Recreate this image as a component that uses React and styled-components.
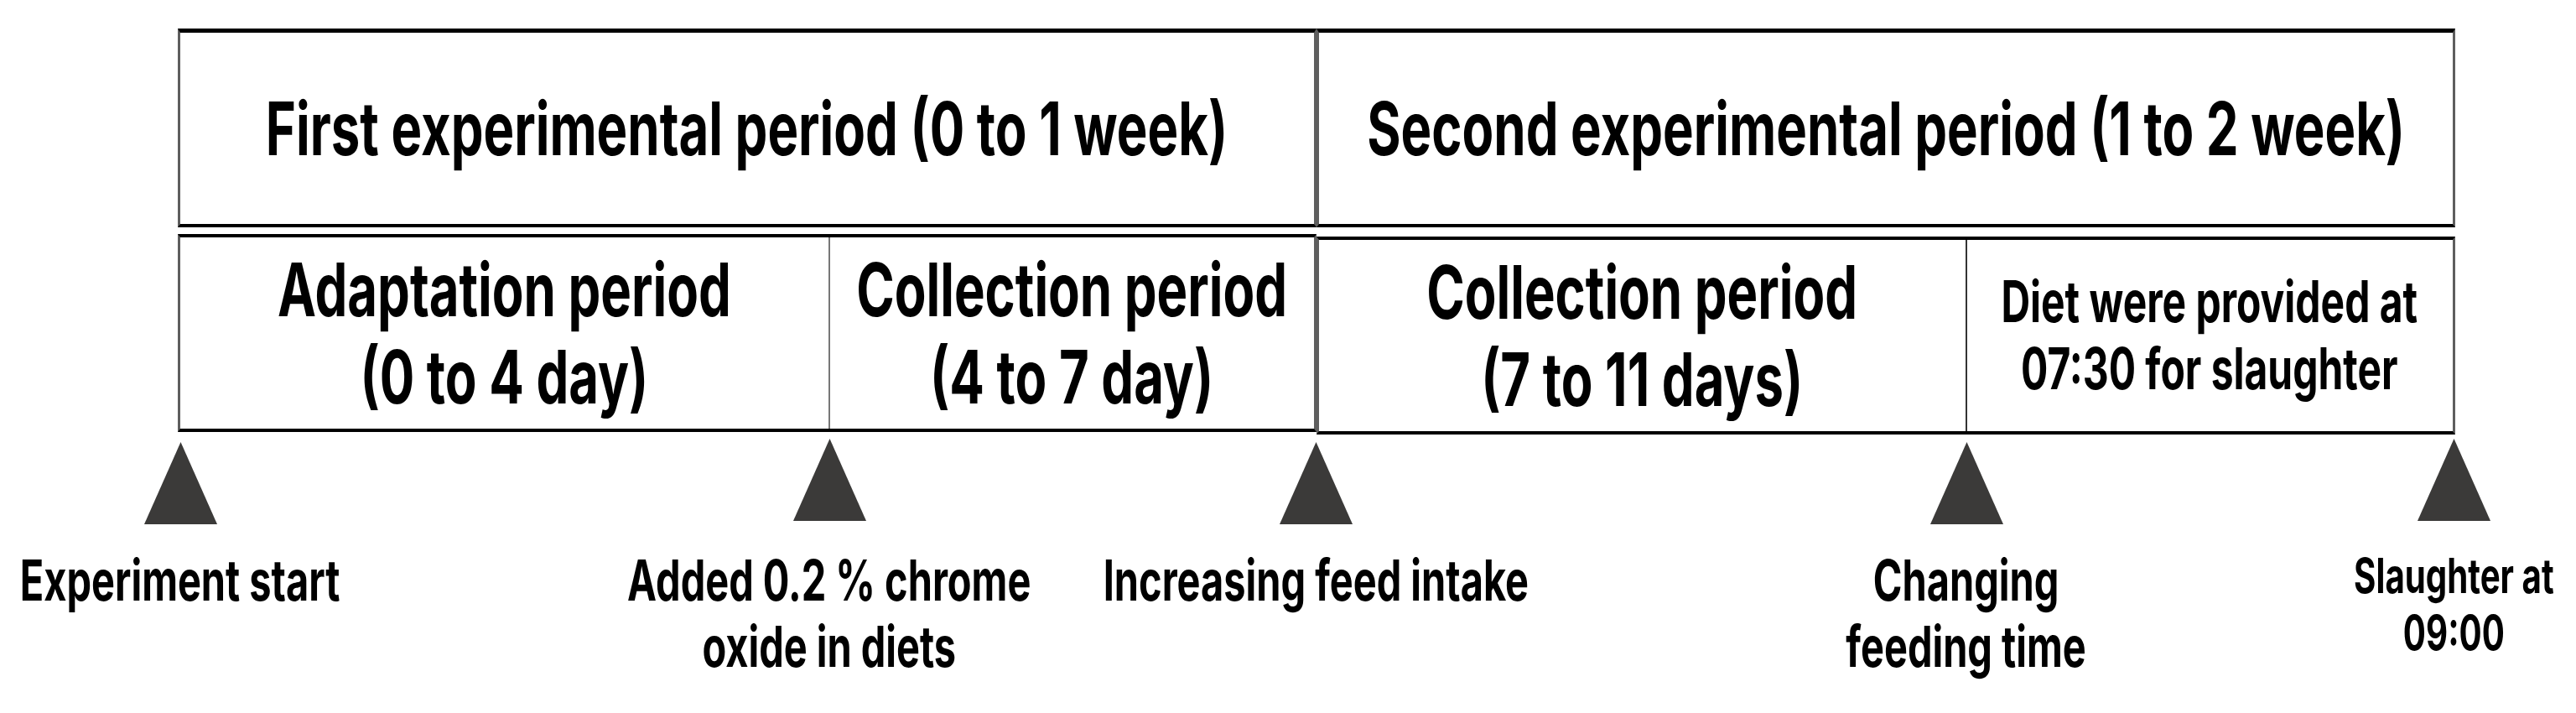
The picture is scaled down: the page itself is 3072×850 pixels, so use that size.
import React from "react";
import styled, { createGlobalStyle } from "styled-components";

const GlobalStyle = createGlobalStyle`
  html, body { margin: 0; padding: 0; background: #ffffff; }
  body {
    width: 3072px;
    height: 850px;
    overflow: hidden;
    font-family: "Inter", "Noto Sans", "DejaVu Sans", sans-serif;
    color: #000;
  }
`;

const Figure = styled.div`
  width: 3072px;
  height: 850px;
  box-sizing: border-box;
  padding: 34px 0 0 212px;
  display: flex;
  flex-direction: column;
`;

const Periods = styled.div`
  display: grid;
  grid-template-columns: 1358px 1358px;
  align-items: start;
`;

const Period = styled.section`
  display: flex;
  flex-direction: column;
  gap: 8px;
`;

const PeriodHeader = styled.div`
  height: 237px;
  box-sizing: border-box;
  border-top: 5px solid #000;
  border-bottom: 4px solid #000;
  border-left: 3px solid #5e5e5e;
  border-right: 3px solid #5e5e5e;
  display: flex;
  align-items: center;
  justify-content: center;
`;

const SubRow = styled.div`
  margin-top: ${(p) => p.$shift || 0}px;
  height: 236px;
  box-sizing: border-box;
  border-top: 4px solid #000;
  border-bottom: 4px solid #000;
  border-left: 3px solid #5e5e5e;
  border-right: 3px solid #5e5e5e;
  display: grid;
  grid-template-columns: ${(p) => p.$cols};
`;

const SubCell = styled.div`
  display: flex;
  align-items: center;
  justify-content: center;
  border-left: ${(p) => (p.$divider ? `2px solid ${p.$divider}` : "none")};
`;

const sizes = {
  header: { size: 88, lh: 106 },
  cell: { size: 88, lh: 104 },
  note: { size: 68.5, lh: 80 },
  label: { size: 67, lh: 79 },
  small: { size: 57.5, lh: 68 },
};

const Text = styled.span`
  display: inline-block;
  white-space: nowrap;
  text-align: center;
  font-weight: 700;
  font-size: ${(p) => sizes[p.$kind].size}px;
  line-height: ${(p) => sizes[p.$kind].lh}px;
  transform: scaleX(0.7);
  transform-origin: center center;
`;

const Markers = styled.div`
  display: grid;
  grid-template-columns: 774px 580px 776px 581px 0px;
  margin: 5px 0 0 3px;
`;

const Marker = styled.div`
  width: 0;
  display: flex;
  flex-direction: column;
  align-items: center;
`;

const Triangle = styled.svg`
  flex: none;
  display: block;
  margin: ${(p) => (p.$lift ? "0 0 31px" : "4px 0 27px")};
`;

const Arrow = ({ lift }) => (
  <Triangle $lift={lift} width="87" height="98" viewBox="0 0 87 98">
    <polygon points="43.5,0 87,98 0,98" fill="#3b3a39" />
  </Triangle>
);

const markers = [
  { lines: ["Experiment start"], kind: "label" },
  { lines: ["Added 0.2 % chrome", "oxide in diets"], kind: "label", lift: true },
  { lines: ["Increasing feed intake"], kind: "label" },
  { lines: ["Changing", "feeding time"], kind: "label" },
  { lines: ["Slaughter at", "09:00"], kind: "small", lift: true },
];

const Lines = ({ lines }) =>
  lines.map((l, i) => (
    <React.Fragment key={i}>
      {i > 0 && <br />}
      {l}
    </React.Fragment>
  ));

export default function App() {
  return (
    <>
      <GlobalStyle />
      <Figure>
        <Periods>
          <Period>
            <PeriodHeader>
              <Text $kind="header">First experimental period (0 to 1 week)</Text>
            </PeriodHeader>
            <SubRow $cols="773px 579px">
              <SubCell>
                <Text $kind="cell">
                  <Lines lines={["Adaptation period", "(0 to 4 day)"]} />
                </Text>
              </SubCell>
              <SubCell $divider="#777">
                <Text $kind="cell">
                  <Lines lines={["Collection period", "(4 to 7 day)"]} />
                </Text>
              </SubCell>
            </SubRow>
          </Period>
          <Period>
            <PeriodHeader>
              <Text $kind="header">Second experimental period (1 to 2 week)</Text>
            </PeriodHeader>
            <SubRow $cols="771px 580px" $shift={3}>
              <SubCell>
                <Text $kind="cell">
                  <Lines lines={["Collection period", "(7 to 11 days)"]} />
                </Text>
              </SubCell>
              <SubCell $divider="#333">
                <Text $kind="note">
                  <Lines lines={["Diet were provided at", "07:30 for slaughter"]} />
                </Text>
              </SubCell>
            </SubRow>
          </Period>
        </Periods>
        <Markers>
          {markers.map((m, i) => (
            <Marker key={i}>
              <Arrow lift={m.lift} />
              <Text $kind={m.kind}>
                <Lines lines={m.lines} />
              </Text>
            </Marker>
          ))}
        </Markers>
      </Figure>
    </>
  );
}
